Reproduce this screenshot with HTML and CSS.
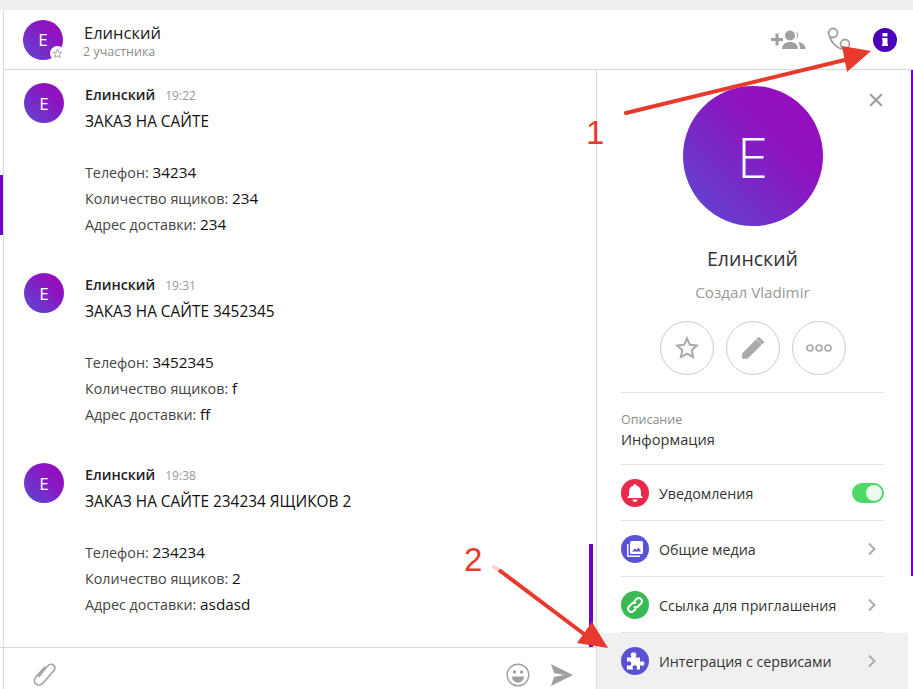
FILE: index.html
```html
<!DOCTYPE html>
<html lang="ru">
<head>
<meta charset="utf-8">
<title>Елинский</title>
<link rel="stylesheet" href="styles.css">
</head>
<body>
<div class="topstrip"></div>
<div class="app">
  <header class="head">
    <div class="avatar head-avatar">Е
      <span class="star-badge"><svg width="11" height="11" viewBox="0 0 24 24"><path d="M12 3l2.700 6 6.500.7-4.900 4.300 1.400 6.400L12 17.100l-5.700 3.300 1.400-6.400L2.800 9.700l6.500-.7z" fill="none" stroke="#999" stroke-width="2"/></svg></span>
    </div>
    <div class="head-text">
      <div class="head-title">Елинский</div>
      <div class="head-sub">2 участника</div>
    </div>
    <div class="head-actions">
      <svg class="act-add" width="35" height="20" viewBox="0 0 35 20"><path d="M0 8h4.500V3.500h3V8H12v3H7.500v4.500h-3V11H0z" fill="#a0a0a0"/><circle cx="19" cy="5.500" r="5" fill="#a0a0a0"/><path d="M11 19c0-4.500 3.500-7 8-7s8 2.500 8 7z" fill="#a0a0a0"/><path d="M24.500 1a5 5 0 0 1 0 9 6.500 6.500 0 0 0 0-9zM27 12c4 .5 7.500 2.500 7.500 7h-5.500c0-2.500-.5-5-2-7z" fill="#a0a0a0"/></svg>
      <svg class="act-phone" width="24" height="24" viewBox="0 0 24 24"><path d="M2.500 8c.5 6 6 12.500 13.500 14.500" fill="none" stroke="#a0a0a0" stroke-width="1.800"/><circle cx="6" cy="6" r="4.500" fill="#fff" stroke="#a0a0a0" stroke-width="1.800"/><circle cx="18" cy="17" r="4.500" fill="#fff" stroke="#a0a0a0" stroke-width="1.800"/></svg>
      <span class="info-btn"><svg width="24" height="24" viewBox="0 0 24 24"><rect x="9.500" y="5" width="5" height="3.500" rx=".5" fill="#fff"/><path d="M9 10h5.500v6.500H15V18H9v-1.500h.5v-5H9z" fill="#fff"/></svg></span>
    </div>
  </header>
  <div class="body">
    <main class="chat">
      <span class="bar bar-left"></span>
      <span class="bar bar-mid"></span>
      <div class="messages">
        <article class="msg">
          <div class="avatar">Е</div>
          <div class="msg-body">
            <div class="msg-head"><b>Елинский</b><time>19:22</time></div>
            <p class="strong">ЗАКАЗ НА САЙТЕ</p>
            <p class="blank">&nbsp;</p>
            <p>Телефон: <span class="val">34234</span></p>
            <p>Количество ящиков: <span class="val">234</span></p>
            <p>Адрес доставки: <span class="val">234</span></p>
          </div>
        </article>
        <article class="msg">
          <div class="avatar">Е</div>
          <div class="msg-body">
            <div class="msg-head"><b>Елинский</b><time>19:31</time></div>
            <p class="strong">ЗАКАЗ НА САЙТЕ 3452345</p>
            <p class="blank">&nbsp;</p>
            <p>Телефон: <span class="val">3452345</span></p>
            <p>Количество ящиков: <span class="val">f</span></p>
            <p>Адрес доставки: <span class="val">ff</span></p>
          </div>
        </article>
        <article class="msg">
          <div class="avatar">Е</div>
          <div class="msg-body">
            <div class="msg-head"><b>Елинский</b><time>19:38</time></div>
            <p class="strong">ЗАКАЗ НА САЙТЕ 234234 ЯЩИКОВ 2</p>
            <p class="blank">&nbsp;</p>
            <p>Телефон: <span class="val">234234</span></p>
            <p>Количество ящиков: <span class="val">2</span></p>
            <p>Адрес доставки: <span class="val">asdasd</span></p>
          </div>
        </article>
      </div>
      <footer class="composer">
        <svg class="clip" width="24" height="26" viewBox="0 0 26 28"><path d="M7 17L17 5c2-2.200 5-2 6.500-.5s1.500 4 0 5.800L12 23.500c-2.500 2.800-6 3-8 1.200s-2-5 .3-7.700L14 6" fill="none" stroke="#a6a6a6" stroke-width="1.800" transform="translate(-1 -1)"/></svg>
        <svg class="smile" width="24" height="24" viewBox="0 0 24 24"><circle cx="12" cy="12" r="10.800" fill="none" stroke="#a0a0a0" stroke-width="1.400"/><circle cx="8.500" cy="9" r="1.700" fill="#a0a0a0"/><circle cx="15.500" cy="9" r="1.700" fill="#a0a0a0"/><path d="M6 13.500h12c0 3.500-2.500 6-6 6s-6-2.500-6-6z" fill="#a0a0a0"/></svg>
        <svg class="send" width="24" height="24" viewBox="0 0 24 24"><path d="M1 1l22 11L1 23l3-9 10-2-10-2z" fill="#a0a0a0"/></svg>
      </footer>
    </main>
    <aside class="panel">
      <svg class="close" width="14" height="14" viewBox="0 0 14 14"><path d="M1 1l12 12M13 1L1 13" stroke="#999" stroke-width="1.800" fill="none"/></svg>
      <div class="big-avatar">Е</div>
      <h1 class="panel-title">Елинский</h1>
      <div class="panel-sub">Создал Vladimir</div>
      <div class="round-row">
        <span class="round"><svg width="24" height="24" viewBox="0 0 24 24"><path d="M12 2.500l2.900 6.300 6.900.8-5.100 4.600 1.400 6.800-6.100-3.400-6.100 3.400 1.400-6.800-5.100-4.600 6.900-.8z" fill="none" stroke="#aaa" stroke-width="2"/></svg></span>
        <span class="round"><svg width="26" height="26" viewBox="0 0 24 24"><path d="M2 22v-5L15 4l5 5L7 22zM16.500 2.500l1-1 5 5-1 1-1.500 1-5-5z" fill="#aaa"/></svg></span>
        <span class="round"><svg width="28" height="10" viewBox="0 0 28 10"><circle cx="5" cy="5" r="3" fill="none" stroke="#aaa" stroke-width="1.700"/><circle cx="14" cy="5" r="3" fill="none" stroke="#aaa" stroke-width="1.700"/><circle cx="23" cy="5" r="3" fill="none" stroke="#aaa" stroke-width="1.700"/></svg></span>
      </div>
      <div class="desc">
        <div class="desc-label">Описание</div>
        <div class="desc-text">Информация</div>
      </div>
      <div class="row">
        <span class="ico red"><svg width="18" height="20" viewBox="0 0 18 20"><path d="M9 1a1.500 1.500 0 0 1 1.500 1.500C13.500 3.200 15 6 15 9v3.500l2 2.500H1l2-2.500V9c0-3 1.500-5.800 4.500-6.500A1.500 1.500 0 0 1 9 1zM6.500 16.500h5a2.500 2.500 0 0 1-5 0z" fill="#fff"/></svg></span>
        <span class="label">Уведомления</span>
        <span class="toggle"><span class="knob"></span></span>
      </div>
      <div class="row">
        <span class="ico blue"><svg width="18" height="18" viewBox="0 0 18 18"><path d="M1 4h1.500v11.500H14V17H2.500A1.500 1.500 0 0 1 1 15.500z" fill="#fff"/><path d="M5.500 1h10A1.500 1.500 0 0 1 17 2.500v10a1.500 1.500 0 0 1-1.500 1.500h-10A1.500 1.500 0 0 1 4 12.500v-10A1.500 1.500 0 0 1 5.500 1zM6 11.500h9l-2.500-4-2 2.500-1.500-1.500z" fill="#fff" fill-rule="evenodd"/></svg></span>
        <span class="label">Общие медиа</span>
        <svg class="chev" width="10" height="14" viewBox="0 0 10 14"><path d="M2 1.500L7.500 7 2 12.500" fill="none" stroke="#a9adb3" stroke-width="2"/></svg>
      </div>
      <div class="row">
        <span class="ico green"><svg width="18" height="18" viewBox="0 0 18 18"><g fill="none" stroke="#fff" stroke-width="2"><path d="M8 5.500l2.500-2.500a3 3 0 0 1 4.500 4.500l-3 3a3 3 0 0 1-4 0"/><path d="M10 12.500L7.500 15A3 3 0 0 1 3 10.500l3-3a3 3 0 0 1 4 0"/></g></svg></span>
        <span class="label">Ссылка для приглашения</span>
        <svg class="chev" width="10" height="14" viewBox="0 0 10 14"><path d="M2 1.500L7.500 7 2 12.500" fill="none" stroke="#a9adb3" stroke-width="2"/></svg>
      </div>
      <div class="row active">
        <span class="ico blue"><svg width="20" height="20" viewBox="0 0 20 20"><path d="M2 6.500h4.500c.2-.8-.8-1.300-.8-2.500a2.800 2.800 0 0 1 5.600 0c0 1.200-1 1.700-.8 2.500H15V11c.8.200 1.300-.7 2.200-.7a2.300 2.300 0 0 1 0 4.600c-.9 0-1.400-.9-2.200-.7v4.300h-3.700c.2-.8.800-1 .8-2a2.300 2.300 0 0 0-4.600 0c0 1 .6 1.200.8 2H2v-4.300c.8-.2 1.200.6 2 .6a2.300 2.300 0 0 0 0-4.600c-.8 0-1.200.8-2 .6z" fill="#fff"/></svg></span>
        <span class="label">Интеграция с сервисами</span>
        <svg class="chev" width="10" height="14" viewBox="0 0 10 14"><path d="M2 1.500L7.500 7 2 12.500" fill="none" stroke="#a9adb3" stroke-width="2"/></svg>
      </div>
      <span class="bar bar-right"></span>
    </aside>
  </div>
  <div class="note note-1">1</div>
  <div class="note note-2">2</div>
  <svg class="arrows" width="913" height="689" viewBox="0 0 913 689">
    <line x1="626" y1="113" x2="853" y2="58" stroke="#e8392d" stroke-width="4" stroke-linecap="round"/>
    <path d="M871 51L842 46 847 72z" fill="#e8392d"/>
    <line x1="494" y1="567" x2="499" y2="570" stroke="#f8d4d2" stroke-width="4" stroke-linecap="round"/>
    <line x1="499" y1="570" x2="592" y2="640" stroke="#e8392d" stroke-width="4"/>
    <path d="M608 648L592 622 577 643z" fill="#e8392d"/>
  </svg>
</div>
</body>
</html>
```

FILE: styles.css
```css
* { box-sizing: border-box; }
html, body { margin: 0; height: 100%; }
body {
  width: 913px;
  height: 689px;
  overflow: hidden;
  background: #fff;
  font-family: "Open Sans", "Liberation Sans", sans-serif;
  color: #222;
  position: relative;
}
.topstrip { height: 10px; background: #efefef; }
.app {
  height: 679px;
  margin-left: 3px;
  border-left: 1px solid #ddd;
  display: flex;
  flex-direction: column;
}
.head {
  height: 60px;
  flex: none;
  border-bottom: 1px solid #d8d8d8;
  display: flex;
  align-items: center;
  padding: 0 16px 0 19px;
}
.avatar {
  width: 40px;
  height: 40px;
  flex: none;
  border-radius: 50%;
  background: linear-gradient(45deg, #5b49d3 0%, #8f12c0 70%, #9a0cbc 100%);
  color: #fff;
  font-size: 17px;
  font-weight: 500;
  display: flex;
  align-items: center;
  justify-content: center;
  position: relative;
}
.star-badge {
  position: absolute;
  right: -2px;
  bottom: -1px;
  width: 15px;
  height: 15px;
  border-radius: 50%;
  background: #fff;
  display: flex;
  align-items: center;
  justify-content: center;
}
.head-text { margin-left: 20px; padding-top: 2px; }
.head-title { font-size: 16.500px; line-height: 21px; color: #222; margin-left: 1px; }
.head-sub { font-size: 12.500px; line-height: 17px; color: #8c8c8c; }
.head-actions { margin-left: auto; display: flex; align-items: center; }
.act-add { margin-right: 21px; }
.act-phone { margin-right: 22px; margin-top: -1px; }
.info-btn {
  width: 24px;
  height: 24px;
  border-radius: 50%;
  background: #4a00b8;
  display: flex;
}
.body { flex: 1; display: flex; min-height: 0; }
.chat {
  width: 593px;
  flex: none;
  display: flex;
  flex-direction: column;
  position: relative;
  border-right: 1px solid #ddd;
}
.bar { position: absolute; background: #6f00d0; width: 3px; }
.bar-left { left: -4px; top: 105px; height: 60px; }
.bar-mid { right: 3px; top: 474px; height: 103px; width: 4px; }
.bar-right { right: 0; top: 0; height: 506px; width: 2px; }
.messages { flex: 1; min-height: 0; overflow: hidden; padding: 13px 0 0 20px; }
.msg { display: flex; margin-bottom: 20px; height: 170px; }
.msg-body { margin-left: 21px; font-size: 14.300px; line-height: 26px; color: #444; }
.msg-body p { margin: 0; height: 26px; }
.msg-head { height: 25px; line-height: 24px; }
.msg-head b { font-weight: 600; color: #222; font-size: 14.300px; }
.msg-head time { margin-left: 10px; font-size: 12px; color: #999; }
.msg-body .strong { color: #111; font-size: 15.400px; font-weight: 500; line-height: 27px; }
.val { color: #111; font-weight: 500; font-size: 15.300px; line-height: 0; }
.composer {
  height: 42px;
  flex: none;
  border-top: 1px solid #d8d8d8;
  margin-left: -4px;
  display: flex;
  align-items: center;
  padding: 12px 22px 0 33px;
}
.clip { margin-right: auto; }
.smile { margin-right: 20px; }
.panel {
  flex: 1;
  position: relative;
  display: flex;
  flex-direction: column;
  align-items: center;
}
.close { position: absolute; top: 23px; right: 30px; }
.big-avatar {
  margin-top: 16px;
  width: 140px;
  height: 140px;
  flex: none;
  border-radius: 50%;
  background: linear-gradient(45deg, #5b49d3 0%, #8f12c0 65%, #9a0cbc 100%);
  color: #fff;
  font-size: 56px;
  font-weight: 300;
  display: flex;
  align-items: center;
  justify-content: center;
  margin-right: 5px;
}
.panel-title { font-size: 19.500px; font-weight: 400; margin: 20px 5px 0 0; line-height: 26px; color: #333; }
.panel-sub { font-size: 15.200px; color: #999; margin: 10px 5px 0 0; line-height: 20px; }
.round-row { display: flex; gap: 12px; margin: 19px 5px 0 0; }
.round {
  width: 54px;
  height: 54px;
  border: 1px solid #ccc;
  border-radius: 50%;
  display: flex;
  align-items: center;
  justify-content: center;
}
.desc {
  align-self: flex-start;
  width: 263px;
  margin: 17px 0 0 24px;
  border-top: 1px solid #e4e4e4;
  border-bottom: 1px solid #e4e4e4;
  padding: 18px 0 9px;
  height: 75px;
}
.desc-label { font-size: 12.500px; line-height: 17px; color: #8c8c8c; }
.desc-text { font-size: 14.600px; line-height: 23px; color: #333; }
.row {
  align-self: flex-start;
  width: 263px;
  height: 56px;
  margin-left: 24px;
  display: flex;
  align-items: center;
  border-bottom: 1px solid #e4e4e4;
  flex: none;
}
.row.active {
  width: 311px;
  padding: 0 24px;
  border-bottom: 0;
  background: #f0f0f0;
  margin-left: 0;
}
.ico {
  width: 28px;
  height: 28px;
  border-radius: 50%;
  display: flex;
  align-items: center;
  justify-content: center;
  flex: none;
}
.red { background: #e8294a; }
.blue { background: #5a52d5; }
.green { background: #39ba55; }
.label { margin-left: 10px; padding-top: 1px; font-size: 14.250px; color: #333; }
.toggle {
  margin-left: auto;
  width: 32px;
  height: 20px;
  border-radius: 10px;
  background: #4cd964;
  position: relative;
}
.knob {
  position: absolute;
  right: 2px;
  top: 2px;
  width: 16px;
  height: 16px;
  border-radius: 50%;
  background: #eef8ee;
}
.chev { margin-left: auto; margin-right: 7px; }
.note { position: absolute; color: #e8392d; font-family: "Liberation Sans", sans-serif; font-size: 33px; line-height: 36px; }
.note-1 { left: 586px; top: 115px; }
.note-2 { left: 464px; top: 542px; }
.arrows { position: absolute; left: 0; top: 0; pointer-events: none; }
```
